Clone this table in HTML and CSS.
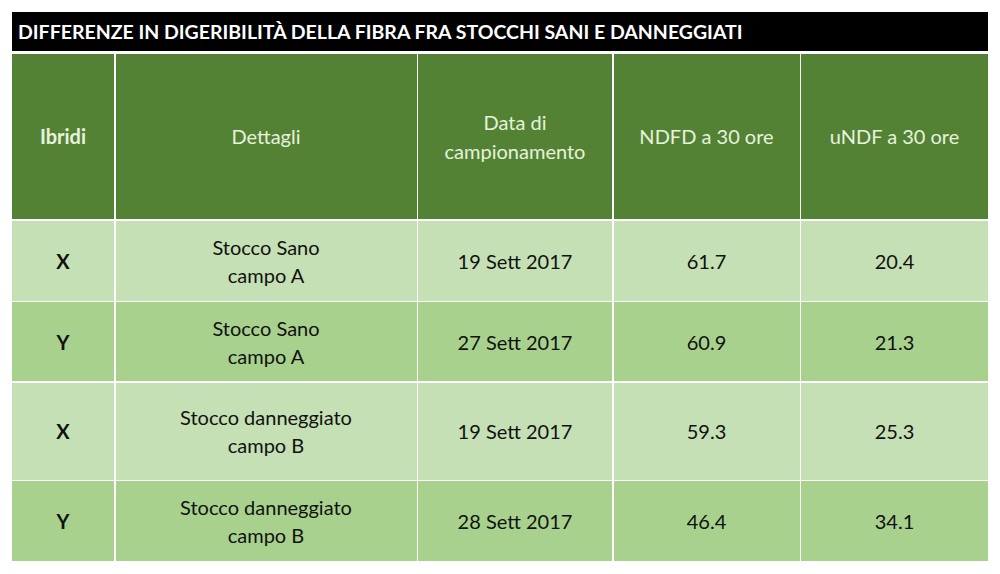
FILE: index.html
```html
<!DOCTYPE html>
<html lang="it">
<head>
<meta charset="utf-8">
<title>Differenze in digeribilità</title>
<link rel="stylesheet" href="styles.css">
</head>
<body>
<div class="page">
  <div class="title">DIFFERENZE IN DIGERIBILITÀ DELLA FIBRA FRA STOCCHI SANI E DANNEGGIATI</div>
  <div class="grid">
    <div class="cell head bold">Ibridi</div>
    <div class="cell head">Dettagli</div>
    <div class="cell head">Data di<br>campionamento</div>
    <div class="cell head">NDFD a 30 ore</div>
    <div class="cell head">uNDF a 30 ore</div>

    <div class="cell light bold">X</div>
    <div class="cell light">Stocco Sano<br>campo A</div>
    <div class="cell light">19 Sett 2017</div>
    <div class="cell light">61.7</div>
    <div class="cell light">20.4</div>

    <div class="cell dark bold">Y</div>
    <div class="cell dark">Stocco Sano<br>campo A</div>
    <div class="cell dark">27 Sett 2017</div>
    <div class="cell dark">60.9</div>
    <div class="cell dark">21.3</div>

    <div class="cell light bold">X</div>
    <div class="cell light">Stocco danneggiato<br>campo B</div>
    <div class="cell light">19 Sett 2017</div>
    <div class="cell light">59.3</div>
    <div class="cell light">25.3</div>

    <div class="cell dark bold">Y</div>
    <div class="cell dark">Stocco danneggiato<br>campo B</div>
    <div class="cell dark">28 Sett 2017</div>
    <div class="cell dark">46.4</div>
    <div class="cell dark">34.1</div>
  </div>
</div>
</body>
</html>
```

FILE: styles.css
```css
html, body {
  margin: 0;
  padding: 0;
  background: #ffffff;
}
body {
  font-family: Lato, "Open Sans", "Liberation Sans", sans-serif;
}
.page {
  padding: 12px 12px 0 12px;
  width: 976px;
}
.title {
  height: 39px;
  background: #000000;
  color: #ffffff;
  font-weight: bold;
  font-size: 19.5px;
  line-height: 39px;
  padding-left: 6px;
  white-space: nowrap;
}
.grid {
  margin-top: 3px;
  display: grid;
  grid-template-columns: 102px 301px 194px 186px 187px;
  grid-template-rows: 165px 80px 79px 97px 80px;
  gap: 1.5px;
  background: #ffffff;
}
.cell {
  display: flex;
  align-items: center;
  justify-content: center;
  text-align: center;
  font-size: 20px;
  line-height: 28px;
  color: #111111;
}
.head {
  background: #548235;
  color: #e6f2dc;
  line-height: 29px;
}
.light {
  background: #c5e0b4;
}
.dark {
  background: #a9d18e;
}
.bold {
  font-weight: bold;
}
```
